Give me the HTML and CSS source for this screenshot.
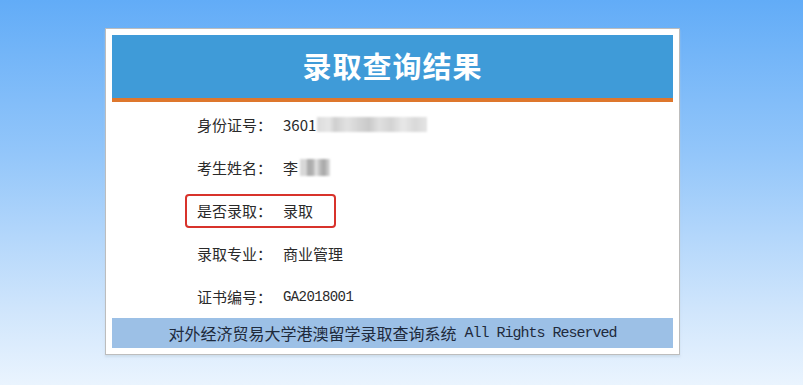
FILE: index.html
```html
<!DOCTYPE html>
<html lang="zh-CN">
<head>
    <meta charset="UTF-8">
    <meta name="viewport" content="width=device-width, initial-scale=1.0">
    <title>录取查询结果</title>

    <link rel="stylesheet" href="styles.css">

</head>
<body>

    <div class="result-card">

        <div class="result-header">
            <h1 class="result-title">录取查询结果</h1>
        </div>

        <div class="result-rows">
            <div class="row">
                <span class="label">身份证号：</span>
                <span class="value">3601<span class="blur blur-id"></span></span>
            </div>
            <div class="row">
                <span class="label">考生姓名：</span>
                <span class="value">李<span class="blur blur-name"></span></span>
            </div>
            <div class="row">
                <div class="highlight">
                    <span class="label">是否录取：</span>
                    <span class="value">录取</span>
                </div>
            </div>
            <div class="row">
                <span class="label">录取专业：</span>
                <span class="value">商业管理</span>
            </div>
            <div class="row">
                <span class="label">证书编号：</span>
                <span class="value mono">GA2018001</span>
            </div>
        </div>

        <div class="result-footer">
            对外经济贸易大学港澳留学录取查询系统<span class="latin"> All Rights Reserved</span>
        </div>

    </div>

</body>
</html>
```

FILE: styles.css
```css
*, *::before, *::after {
    margin: 0;
    padding: 0;
    box-sizing: border-box;
}

body {
    width: 100%;
    height: 385px;
    overflow: hidden;
    background: linear-gradient(to bottom, #62acf7 0%, #93c6fa 40%, #cfe5fc 80%, #eaf4fe 100%);
    font-family: "Noto Sans CJK SC", "Noto Sans", sans-serif;
    color: #2a2a2a;
    padding: 28px 0 0 105px;
}

.result-card {
    width: 575px;
    background-color: #fff;
    border: 1px solid #bdbdbd;
    padding: 6px;
    box-shadow: 0 2px 2px rgba(190, 205, 220, 0.5);
}

.result-header {
    height: 67px;
    background-color: #3f9bd8;
    border-bottom: 4px solid #de772d;
    display: flex;
    justify-content: center;
    align-items: center;
}

.result-title {
    color: #fff;
    font-size: 29px;
    font-weight: 700;
    letter-spacing: 1px;
    line-height: 1;
    padding-bottom: 2px;
}

.result-rows {
    display: flex;
    flex-direction: column;
    padding-top: 1px;
}

.row {
    height: 43px;
    display: flex;
    align-items: center;
    padding-left: 85px;
    font-size: 15px;
}

.label {
    width: 86px;
    flex-shrink: 0;
}

.value {
    display: flex;
    align-items: center;
}

.mono {
    font-family: "Liberation Mono", "DejaVu Sans Mono", monospace;
    font-size: 14px;
    letter-spacing: -0.6px;
}

.blur {
    display: inline-block;
    height: 15px;
    filter: blur(1px);
}

.blur-id {
    width: 110px;
    margin-left: 1px;
    background: linear-gradient(to right,
        #dcdcdc 0, #e6e6e6 12px, #cfcfcf 18px, #e2e2e2 30px, #d6d6d6 40px,
        #c9c9c9 52px, #e0e0e0 62px, #d3d3d3 74px, #e8e8e8 86px, #d9d9d9 98px, #e4e4e4 110px);
}

.blur-name {
    width: 30px;
    height: 17px;
    margin-left: 2px;
    background: linear-gradient(to right,
        #d8d8d8 0, #d8d8d8 6px, #a9a9a9 8px, #b2b2b2 13px, #e6e6e6 16px,
        #bdbdbd 20px, #a5a5a5 24px, #dedede 30px);
}

.highlight {
    display: flex;
    align-items: center;
    height: 34px;
    margin-left: -12px;
    padding: 0 21px 0 10px;
    border: 2px solid #d8322b;
    border-radius: 4px;
}

.result-footer {
    height: 30px;
    background-color: #9cc0e6;
    display: flex;
    justify-content: center;
    align-items: center;
    font-size: 16px;
    color: #1e2a3c;
}

.latin {
    font-family: "Liberation Mono", "DejaVu Sans Mono", monospace;
    font-size: 15px;
    letter-spacing: -1px;
    white-space: pre;
}
```
